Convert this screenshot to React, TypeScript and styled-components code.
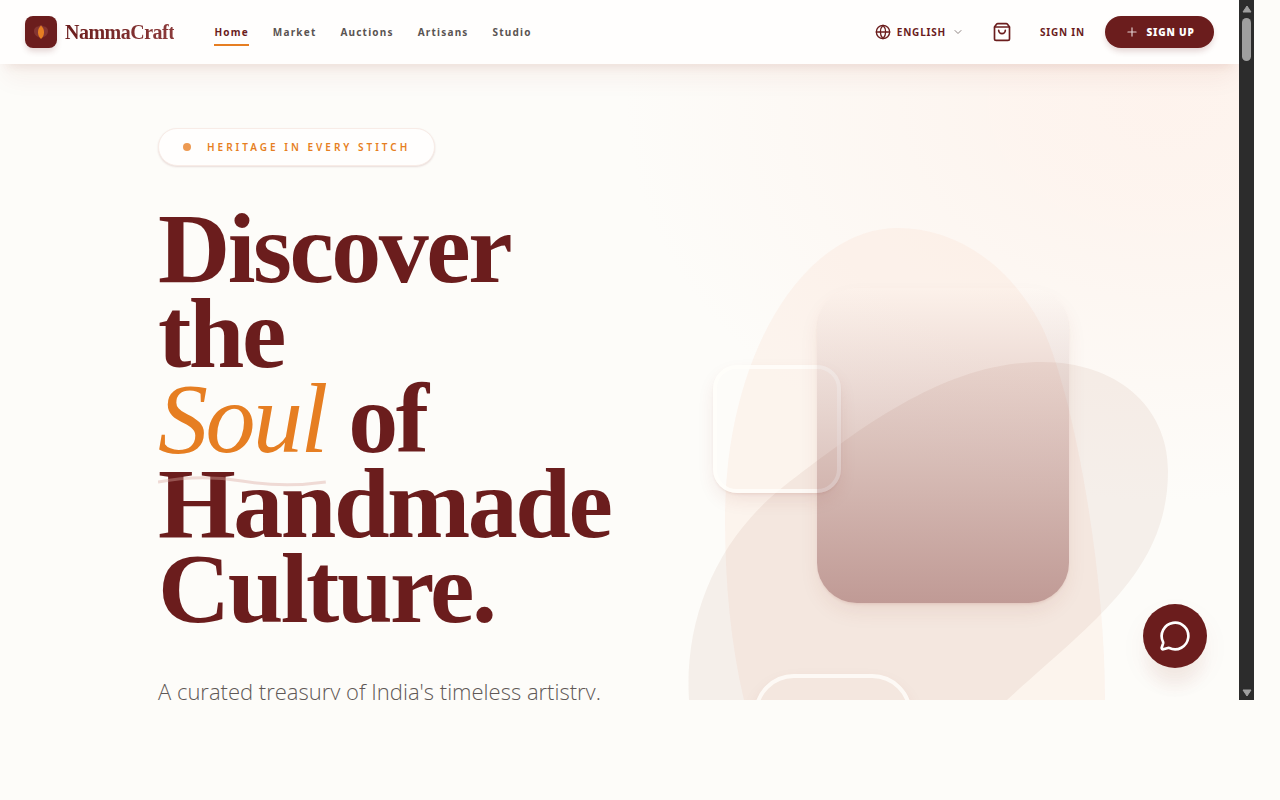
import React from "react";
import styled, { createGlobalStyle } from "styled-components";
import { ChevronDown, Globe, MessageCircle, Plus, ShoppingBag } from "lucide-react";

const maroon = "#6b1d1d";
const orange = "#e67e22";
const cream = "#fdfcf9";
const serif = `"Liberation Serif", "Times New Roman", serif`;
const sans = `"Noto Sans", "Open Sans", sans-serif`;

const GlobalStyle = createGlobalStyle`
  *, *::before, *::after { box-sizing: border-box; }
  body { margin: 0; background: ${cream}; font-family: ${sans}; color: ${maroon}; }
  a { color: inherit; text-decoration: none; }
  button { font: inherit; border: 0; padding: 0; background: none; color: inherit; cursor: pointer; letter-spacing: inherit; }
`;

const Frame = styled.div`
  display: grid;
  grid-template-columns: minmax(0, 1fr) 15px;
  height: calc(100vh - 100px);
  margin-right: 26px;
`;

const Viewport = styled.div`
  position: relative;
  display: flex;
  flex-direction: column;
  overflow: hidden;
`;

const Header = styled.header`
  position: relative;
  z-index: 2;
  display: flex;
  align-items: center;
  flex: none;
  height: 64px;
  padding: 0 25px;
  background: #fffefd;
  box-shadow: 0 20px 25px -5px rgba(139, 45, 29, 0.05), 0 8px 10px -6px rgba(139, 45, 29, 0.1);
`;

const Brand = styled.a`
  display: flex;
  align-items: center;
  gap: 8px;
`;

const BrandMark = styled.span`
  display: grid;
  place-items: center;
  width: 32px;
  height: 32px;
  border-radius: 8px;
  background: ${maroon};
  box-shadow: 0 4px 6px -1px rgba(107, 29, 29, 0.2);
`;

const BrandName = styled.span`
  font: 700 20px/28px ${serif};
  letter-spacing: -0.025em;
  background: linear-gradient(90deg, ${maroon}, #8b3a3a);
  background-clip: text;
  color: transparent;
`;

const Nav = styled.nav`
  display: flex;
  gap: 24px;
  margin-left: 40px;
`;

const NavLink = styled.a<{ $active?: boolean }>`
  padding: 6px 0 4px;
  border-bottom: 2px solid ${(p) => (p.$active ? orange : "transparent")};
  color: ${(p) => (p.$active ? maroon : "#5a5452")};
  font-size: 10px;
  font-weight: 700;
  line-height: 16px;
  letter-spacing: 0.12em;
`;

const Actions = styled.div`
  display: flex;
  align-items: center;
  margin-left: auto;
  font-size: 10px;
  font-weight: 700;
  line-height: 16px;
  letter-spacing: 0.08em;
`;

const Language = styled.button`
  display: flex;
  align-items: center;
  gap: 6px;
  margin-right: 28px;
`;

const BagButton = styled.button`
  display: grid;
  margin-right: 28px;
`;

const SignIn = styled.a`
  margin-right: 20px;
`;

const SignUp = styled.button`
  display: flex;
  align-items: center;
  justify-content: center;
  gap: 8px;
  width: 109px;
  height: 32px;
  border-radius: 16px;
  background: ${maroon};
  color: #fff;
  font-weight: 900;
  box-shadow: 0 4px 6px -1px rgba(107, 29, 29, 0.2);
`;

const Hero = styled.main`
  display: grid;
  grid-template-columns: minmax(0, 3fr) minmax(0, 4fr);
  flex: 1;
  min-height: 0;
  padding-left: 158px;
  background:
    radial-gradient(ellipse 540px 400px at 94% 6%, rgba(255, 225, 212, 0.32), rgba(255, 225, 212, 0.28) 25%, rgba(255, 225, 212, 0) 100%),
    ${cream};
`;

const Copy = styled.section`
  padding-top: 64px;
`;

const Badge = styled.div`
  display: inline-flex;
  align-items: center;
  gap: 16px;
  height: 38px;
  padding: 0 24px;
  border: 1px solid #f8ece7;
  border-radius: 19px;
  background: #fffefd;
  color: ${orange};
  font-size: 10px;
  font-weight: 600;
  line-height: 16px;
  letter-spacing: 0.3em;
  white-space: nowrap;
  box-shadow: 0 1px 2px rgba(107, 29, 29, 0.14);
`;

const Dot = styled.span`
  width: 8px;
  height: 8px;
  border-radius: 50%;
  background: #ed9a52;
`;

const Title = styled.h1`
  margin: 40px 0;
  font: 700 100px/85px ${serif};
  letter-spacing: -0.025em;
`;

const Soul = styled.em`
  position: relative;
  display: inline-block;
  color: ${orange};
  font-weight: 400;
`;

const Squiggle = styled.svg`
  position: absolute;
  left: 0;
  top: 99px;
  width: 100%;
  height: 14px;
`;

const Lead = styled.p`
  margin: 0;
  color: #5f5856;
  font-family: "Open Sans", sans-serif;
  font-size: 22px;
  font-weight: 300;
  line-height: 40px;
  white-space: nowrap;
`;

const Artwork = styled.section`
  position: relative;
  overflow: hidden;
`;

const Blobs = styled.svg`
  position: absolute;
  top: 0;
  left: 0;
  width: 618px;
  height: 636px;
`;

const MainCard = styled.div`
  position: absolute;
  top: 224px;
  left: 196px;
  width: 252px;
  height: 315px;
  border-radius: 40px;
  background: linear-gradient(to bottom, rgba(107, 29, 29, 0), rgba(107, 29, 29, 0.38));
  box-shadow: 0 10px 22px -4px rgba(139, 45, 29, 0.1), 0 2px 3px -1px rgba(139, 45, 29, 0.12);
`;

const GlassCard = styled.div<{ $top: number; $left: number; $size: number; $radius: number }>`
  position: absolute;
  top: ${(p) => p.$top}px;
  left: ${(p) => p.$left}px;
  width: ${(p) => p.$size}px;
  height: ${(p) => p.$size}px;
  border: 4px solid rgba(255, 254, 250, 0.8);
  border-radius: ${(p) => p.$radius}px;
  box-shadow: 0 8px 20px -4px rgba(139, 45, 29, 0.12), 0 2px 3px -1px rgba(139, 45, 29, 0.1);
`;

const ChatButton = styled.button`
  position: absolute;
  right: 32px;
  bottom: 32px;
  display: grid;
  place-items: center;
  width: 64px;
  height: 64px;
  border-radius: 50%;
  background: ${maroon};
  color: #fff;
  box-shadow: 0 24px 16px -6px rgba(139, 45, 29, 0.06), 0 12px 28px rgba(139, 45, 29, 0.05);
`;

const Scrollbar = styled.div`
  display: flex;
  flex-direction: column;
  align-items: center;
  justify-content: space-between;
  padding: 5px 0 3px;
  background: #2c2c2c;
`;

const ScrollTop = styled.div`
  display: flex;
  flex-direction: column;
  align-items: center;
  gap: 5px;
`;

const Thumb = styled.div`
  width: 9px;
  height: 43px;
  border-radius: 5px;
  background: #9f9f9f;
`;

const links = ["Home", "Market", "Auctions", "Artisans", "Studio"];

export default function App() {
  return (
    <>
      <GlobalStyle />
      <Frame>
        <Viewport>
          <Header>
            <Brand href="#">
              <BrandMark>
                <svg width="16" height="16" viewBox="0 0 16 16" aria-hidden="true">
                  <path d="M8 14C3.500 13 1 10.500 1 7C1 4 3 2.500 5 2.500L8 1L11 2.500C13 2.500 15 4 15 7C15 10.500 12.500 13 8 14Z" fill="#843532" />
                  <path d="M8 1.500C10 3.500 11 5.500 11 8.200C11 11 10 13 8 15C6 13 5 11 5 8.200C5 5.500 6 3.500 8 1.500Z" fill={orange} />
                </svg>
              </BrandMark>
              <BrandName>NammaCraft</BrandName>
            </Brand>
            <Nav>
              {links.map((label) => (
                <NavLink key={label} href="#" $active={label === "Home"}>
                  {label}
                </NavLink>
              ))}
            </Nav>
            <Actions>
              <Language>
                <Globe size={16} strokeWidth={2} />
                ENGLISH
                <ChevronDown size={12} strokeWidth={2} color="#8f8583" />
              </Language>
              <BagButton aria-label="Shopping bag">
                <ShoppingBag size={20} strokeWidth={2} />
              </BagButton>
              <SignIn href="#">SIGN IN</SignIn>
              <SignUp>
                <Plus size={14} strokeWidth={2} color="#e3d0d0" />
                SIGN UP
              </SignUp>
            </Actions>
          </Header>

          <Hero>
            <Copy>
              <Badge>
                <Dot />
                HERITAGE IN EVERY STITCH
              </Badge>
              <Title>
                Discover
                <br />
                the
                <br />
                <Soul>
                  Soul
                  <Squiggle viewBox="0 0 168 14" preserveAspectRatio="none" aria-hidden="true">
                    <path d="M0 7Q42 -1 84 6T168 7" fill="none" stroke="#d9a8a0" strokeOpacity="0.4" strokeWidth="3" />
                  </Squiggle>
                </Soul>{" "}
                of
                <br />
                Handmade
                <br />
                Culture.
              </Title>
              <Lead>A curated treasury of India's timeless artistry.</Lead>
            </Copy>

            <Artwork aria-hidden="true">
              <Blobs viewBox="621 64 618 636">
                <path
                  d="M744 700C731 645 725 585 725 517A173 289 0 0 1 898 228C952 228 1006 260 1040 323C1070 380 1105 560 1105 700Z"
                  fill="#fbdccd"
                  fillOpacity="0.26"
                />
                <path
                  d="M689 700C684 620 716 540 783 487C860 428 945 362 1042 362C1115 362 1168 405 1168 471C1168 570 1095 620 1007 700Z"
                  fill="#8a3c20"
                  fillOpacity="0.065"
                />
              </Blobs>
              <GlassCard $top={301} $left={92} $size={128} $radius={24} />
              <MainCard />
              <GlassCard $top={610} $left={133} $size={158} $radius={40} />
            </Artwork>
          </Hero>

          <ChatButton aria-label="Open chat">
            <MessageCircle size={32} strokeWidth={2} />
          </ChatButton>
        </Viewport>

        <Scrollbar aria-hidden="true">
          <ScrollTop>
            <svg width="10" height="8" viewBox="0 0 10 8">
              <path d="M5 1L9 7H1Z" fill="#9f9f9f" stroke="#9f9f9f" strokeLinejoin="round" />
            </svg>
            <Thumb />
          </ScrollTop>
          <svg width="10" height="8" viewBox="0 0 10 8">
            <path d="M5 7L1 1H9Z" fill="#9f9f9f" stroke="#9f9f9f" strokeLinejoin="round" />
          </svg>
        </Scrollbar>
      </Frame>
    </>
  );
}
